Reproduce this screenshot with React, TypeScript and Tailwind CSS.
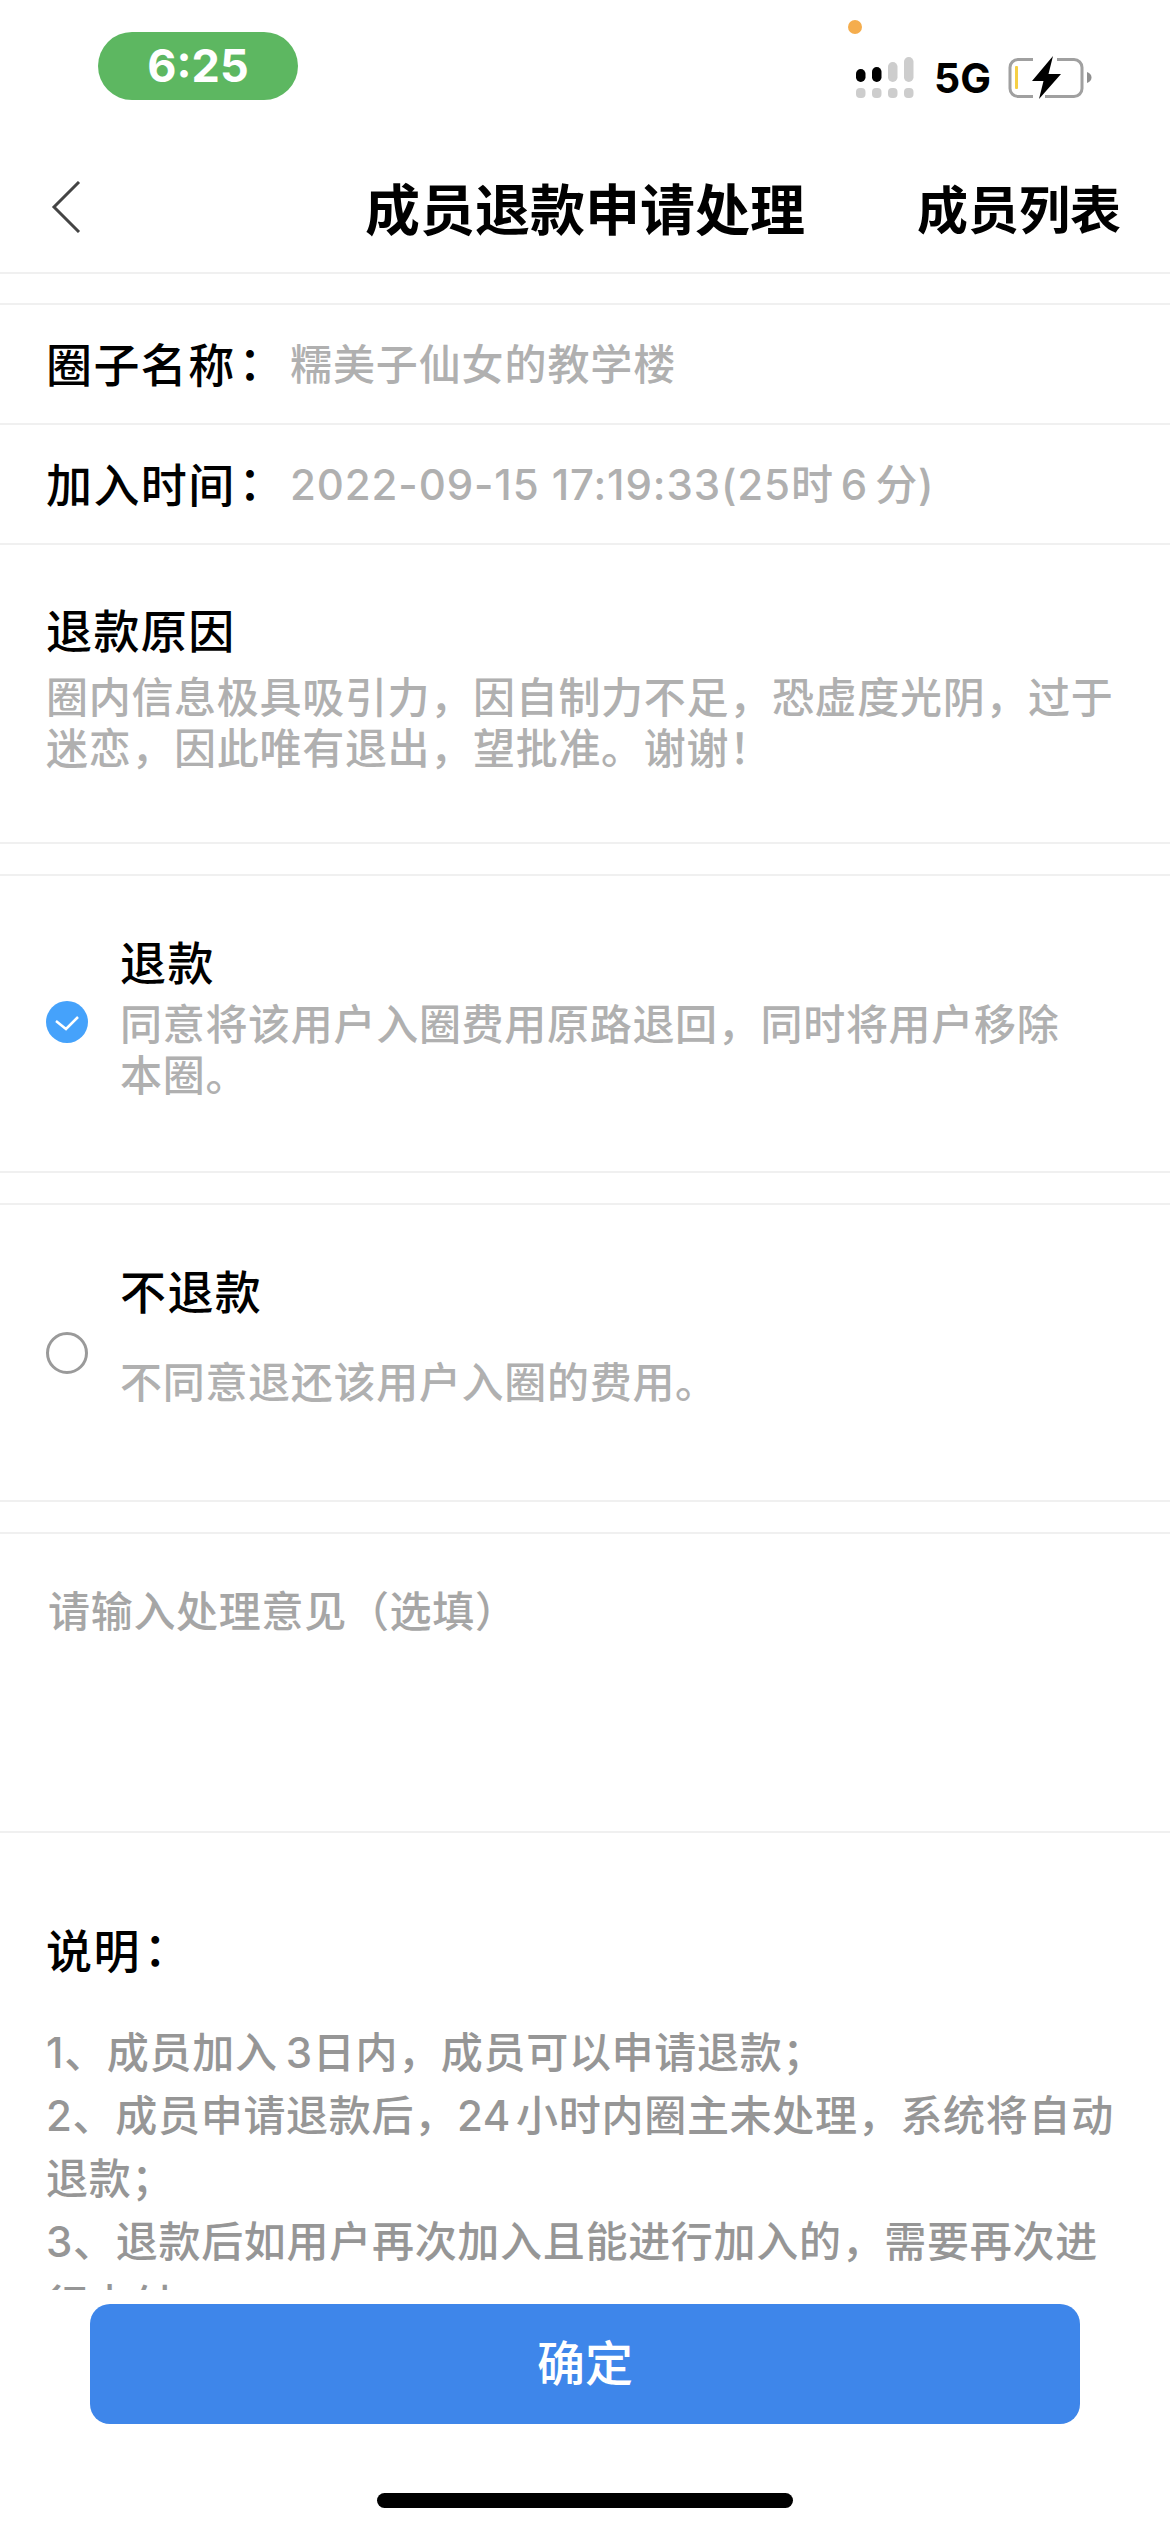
const font = { fontFamily: 'Inter,"Noto Sans CJK SC",sans-serif' };
const twColon = { fontFamily: '"Noto Sans CJK TC",sans-serif' };

function Line() {
  return <div className="h-[2px] shrink-0 bg-[#f0f0f0]" />;
}

function StatusIcons() {
  return (
    <svg width="240" height="56" viewBox="0 0 240 56" className="block">
      <rect x="0" y="19" width="9.5" height="13" rx="4.7" fill="#000" />
      <rect x="16" y="17" width="9.5" height="15" rx="4.7" fill="#000" />
      <rect x="32" y="12" width="9.5" height="20" rx="4.7" fill="#cdcdcd" />
      <rect x="48" y="7" width="9.5" height="25" rx="4.7" fill="#cdcdcd" />
      <rect x="0" y="38" width="9.5" height="10" rx="4" fill="#cdcdcd" />
      <rect x="16" y="38" width="9.5" height="10" rx="4" fill="#cdcdcd" />
      <rect x="32" y="38" width="9.5" height="10" rx="4" fill="#cdcdcd" />
      <rect x="48" y="38" width="9.5" height="10" rx="4" fill="#cdcdcd" />
      <path d="M177 9.500h-15a8 8 0 0 0-8 8v21a8 8 0 0 0 8 8h15M201 9.500h17a8 8 0 0 1 8 8v21a8 8 0 0 1-8 8h-29" fill="none" stroke="#a0a0a0" strokeWidth="3" />
      <rect x="159" y="16" width="3" height="23" rx="1" fill="#f5cf45" />
      <path d="M197 6 176 31h11.500l-4.500 18 22-25h-12.500z" fill="#000" />
      <path d="M231 22c3 1 4.500 3 4.500 5.500s-1.500 4.500-4.500 5.500z" fill="#8f8f8f" />
    </svg>
  );
}

function Info({ label, children }: { label: string; children: React.ReactNode }) {
  return (
    <div className="h-[118px] shrink-0 flex items-center pl-[46px]">
      <span className="text-[46px] tracking-[1.4px] font-medium text-black w-[244px] shrink-0 whitespace-nowrap">
        {label}
        <span style={twColon} className="ml-[3px] [font-feature-settings:'halt']">：</span>
      </span>
      <span className="text-[42px] tracking-[0.9px] font-medium text-[#b0b0b0] whitespace-nowrap">{children}</span>
    </div>
  );
}

export default function App() {
  return (
    <div style={font} className="w-[1170px] h-[2532px] bg-white overflow-hidden flex flex-col">
      <div className="h-[272px] shrink-0 flex flex-col">
        <div className="h-[128px] shrink-0 flex justify-between items-start pl-[98px] pr-[74px] pt-[32px]">
          <div className="w-[200px] h-[68px] rounded-[34px] bg-[#5db761] text-white text-[45px] font-bold flex items-center justify-center">6:25</div>
          <div className="relative w-[240px] h-[56px] mt-[18px]">
            <span className="absolute left-[-8px] top-[-30px] w-[14px] h-[14px] rounded-full bg-[#f5ad4d]" />
            <StatusIcons />
            <span className="absolute left-[78px] top-[13px] text-[41px] font-bold text-black leading-[30px]">5G</span>
          </div>
        </div>
        <div className="h-[144px] shrink-0 flex items-center relative pt-[20px]">
          <svg width="30" height="52" viewBox="0 0 30 52" className="absolute left-[51px] top-[53px]">
            <path d="M28 1 3 26l25 25" fill="none" stroke="#444" strokeWidth="3" />
          </svg>
          <div className="w-full text-center text-[55px] font-bold text-black leading-[72px]">成员退款申请处理</div>
          <span className="absolute right-[49px] top-[47px] text-[51px] font-bold text-black leading-[72px]">成员列表</span>
        </div>
      </div>
      <Line />
      <div className="h-[29px] shrink-0" />
      <Line />
      <Info label="圈子名称">糯美子仙女的教学楼</Info>
      <Line />
      <Info label="加入时间">
        2022-09-15 17:19:33(25时<span className="mx-[7px]">6</span>分)
      </Info>
      <Line />
      <div className="h-[297px] shrink-0 px-[46px] pt-[56px]">
        <div className="text-[46px] tracking-[1.4px] font-medium text-black leading-[60px]">退款原因</div>
        <div className="text-[42px] tracking-[0.7px] font-medium text-[#b0b0b0] leading-[51px] mt-[11px]">圈内信息极具吸引力，因自制力不足，恐虚度光阴，过于迷恋，因此唯有退出，望批准。谢谢！</div>
      </div>
      <Line />
      <div className="h-[30px] shrink-0" />
      <Line />
      <div className="h-[295px] shrink-0 flex items-start pl-[46px] pr-[80px]">
        <svg width="42" height="42" viewBox="0 0 42 42" className="shrink-0 mt-[125px]">
          <circle cx="21" cy="21" r="21" fill="#45a2fb" />
          <path d="M10 20l10 8 12-12" fill="none" stroke="#fff" strokeWidth="2.500" />
        </svg>
        <div className="ml-[32px] pt-[57px]">
          <div className="text-[46px] tracking-[1.4px] font-medium text-black leading-[60px]">退款</div>
          <div className="text-[42px] tracking-[0.7px] font-medium text-[#b0b0b0] leading-[51px] mt-[6px]">同意将该用户入圈费用原路退回，同时将用户移除本圈。</div>
        </div>
      </div>
      <Line />
      <div className="h-[30px] shrink-0" />
      <Line />
      <div className="h-[295px] shrink-0 flex items-start pl-[46px] pr-[80px]">
        <div className="w-[42px] h-[42px] rounded-full border-[3px] border-[#9a9a9a] shrink-0 mt-[127px]" />
        <div className="ml-[32px] pt-[57px]">
          <div className="text-[46px] tracking-[1.4px] font-medium text-black leading-[60px]">不退款</div>
          <div className="text-[42px] tracking-[0.7px] font-medium text-[#b0b0b0] leading-[51px] mt-[35px]">不同意退还该用户入圈的费用。</div>
        </div>
      </div>
      <Line />
      <div className="h-[30px] shrink-0" />
      <Line />
      <div className="h-[297px] shrink-0 pl-[48px] pt-[48px] text-[42px] tracking-[0.7px] font-medium text-[#a6a6a6] leading-[60px]">请输入处理意见（选填）</div>
      <Line />
      <div className="h-[457px] shrink-0 overflow-hidden px-[46px] pt-[85px]">
        <div className="text-[46px] tracking-[1.4px] font-medium text-black leading-[60px]">
          说明<span style={twColon} className="ml-[3px] [font-feature-settings:'halt']">：</span>
        </div>
        <div className="mt-[40px] text-[42px] tracking-[0.7px] font-medium text-[#969696] leading-[63px]">
          <div>1、成员加入<span className="ml-[8px]">3</span>日内，成员可以申请退款；</div>
          <div>2、成员申请退款后，<span className="mr-[5px]">24</span>小时内圈主未处理，系统将自动退款；</div>
          <div>3、退款后如用户再次加入且能进行加入的，需要再次进行支付。</div>
        </div>
      </div>
      <div className="h-[120px] mx-[90px] mt-[14px] shrink-0 rounded-[20px] bg-[#3e86ea] text-white text-[48px] font-medium flex items-center justify-center">确定</div>
      <div className="w-[416px] h-[15px] mx-auto mt-[69px] shrink-0 rounded-full bg-black" />
    </div>
  );
}
